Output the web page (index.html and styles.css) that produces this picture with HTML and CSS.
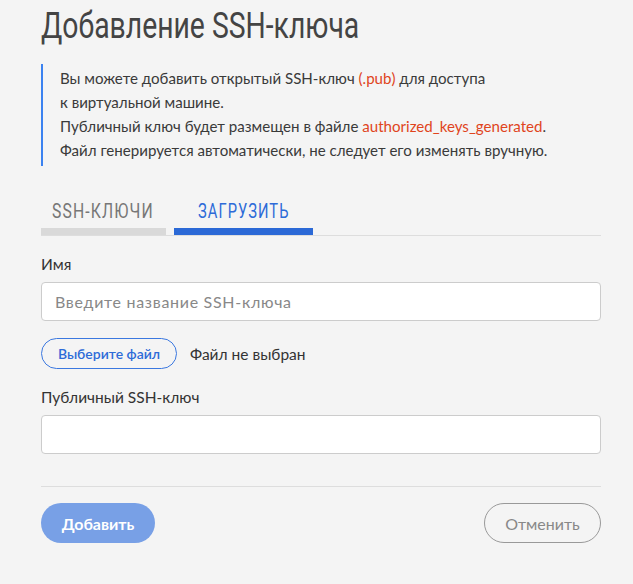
FILE: index.html
```html
<!DOCTYPE html>
<html lang="ru">
<head>
<meta charset="utf-8">
<link rel="stylesheet" href="styles.css">
</head>
<body>
<div class="page">
  <h1 class="title"><span class="cond">Добавление SSH-ключа</span></h1>
  <div class="note">
    <p>Вы можете добавить открытый SSH-ключ <span class="hl">(.pub)</span> для доступа<br>к виртуальной машине.</p>
    <p>Публичный ключ будет размещен в файле <span class="hl">authorized_keys_generated</span>.</p>
    <p>Файл генерируется автоматически, не следует его изменять вручную.</p>
  </div>
  <div class="tabs">
    <div class="tab"><span class="cond">SSH-КЛЮЧИ</span></div>
    <div class="tab active"><span class="cond">ЗАГРУЗИТЬ</span></div>
  </div>
  <div class="field">
    <label class="label">Имя</label>
    <div class="input placeholder">Введите название SSH-ключа</div>
  </div>
  <div class="file-row">
    <button class="file-btn">Выберите файл</button>
    <span class="file-text">Файл не выбран</span>
  </div>
  <div class="field">
    <label class="label">Публичный SSH-ключ</label>
    <div class="input"></div>
  </div>
  <div class="divider"></div>
  <div class="actions">
    <button class="btn primary">Добавить</button>
    <button class="btn secondary">Отменить</button>
  </div>
</div>
</body>
</html>
```
FILE: styles.css
```css
html, body {
  margin: 0;
  padding: 0;
  background: #f4f4f4;
}
body {
  font-family: Lato, "Noto Sans", sans-serif;
  color: #333;
}
.page {
  width: 560px;
  padding: 0 0 0 41px;
}
.cond {
  display: inline-block;
  white-space: nowrap;
  transform-origin: left center;
}
.title {
  margin: 0;
  padding-top: 4px;
  font-family: Roboto, sans-serif;
  font-weight: 400;
  font-size: 36px;
  line-height: 44px;
  color: #444;
  white-space: nowrap;
}
.title .cond {
  transform: scaleX(0.787);
}
.note {
  margin-top: 16px;
  border-left: 2px solid #3b82f0;
  padding: 2px 0 4px 17px;
  font-size: 15.1px;
  line-height: 24px;
  color: #3a3a3a;
}
.note p { margin: 0; }
.hl { color: #e0441c; }
.tabs {
  margin-top: 24px;
  display: flex;
  border-bottom: 1px solid #ddd;
}
.tab {
  width: 125px;
  box-sizing: border-box;
  padding: 10px 0 6px 11px;
  font-family: Roboto, sans-serif;
  font-weight: 400;
  font-size: 21px;
  line-height: 22px;
  color: #777;
  letter-spacing: 1.5px;
  border-bottom: 7px solid #d9d9d9;
  white-space: nowrap;
}
.tab .cond {
  transform: scaleX(0.75);
}
.tab.active {
  margin-left: 8px;
  width: 139px;
  padding-left: 24px;
  color: #2d6bd8;
  border-bottom-color: #2b69d6;
}
.tab.active .cond {
  transform: scaleX(0.7);
}
.field { margin-top: 18px; }
.label {
  display: block;
  font-size: 15.5px;
  line-height: 20px;
  color: #333;
  margin-bottom: 8px;
}
.input {
  box-sizing: border-box;
  height: 39px;
  background: #fff;
  border: 1px solid #ccc;
  border-radius: 4px;
  padding: 0 13px;
  font-size: 16px;
  line-height: 37px;
}
.placeholder {
  color: #888;
  letter-spacing: 0.7px;
}
.file-row {
  margin-top: 17px;
  display: flex;
  align-items: center;
  gap: 13px;
}
.file-btn {
  height: 31px;
  width: 136px;
  border: 1px solid #3b78e0;
  border-radius: 16px;
  background: transparent;
  color: #2d6bd8;
  font-family: Lato, sans-serif;
  font-size: 14px;
  font-weight: 600;
  padding: 0;
}
.file-text {
  font-size: 15.5px;
  color: #333;
}
.divider {
  margin-top: 32px;
  border-top: 1px solid #ddd;
}
.actions {
  margin-top: 16px;
  display: flex;
  justify-content: space-between;
}
.btn {
  height: 40px;
  border-radius: 20px;
  font-family: Lato, sans-serif;
  font-size: 16px;
  padding: 0;
}
.primary {
  width: 114px;
  border: none;
  background: #78a0e6;
  color: #fff;
  font-weight: bold;
}
.secondary {
  width: 117px;
  border: 1px solid #999;
  background: transparent;
  color: #888;
}
```
